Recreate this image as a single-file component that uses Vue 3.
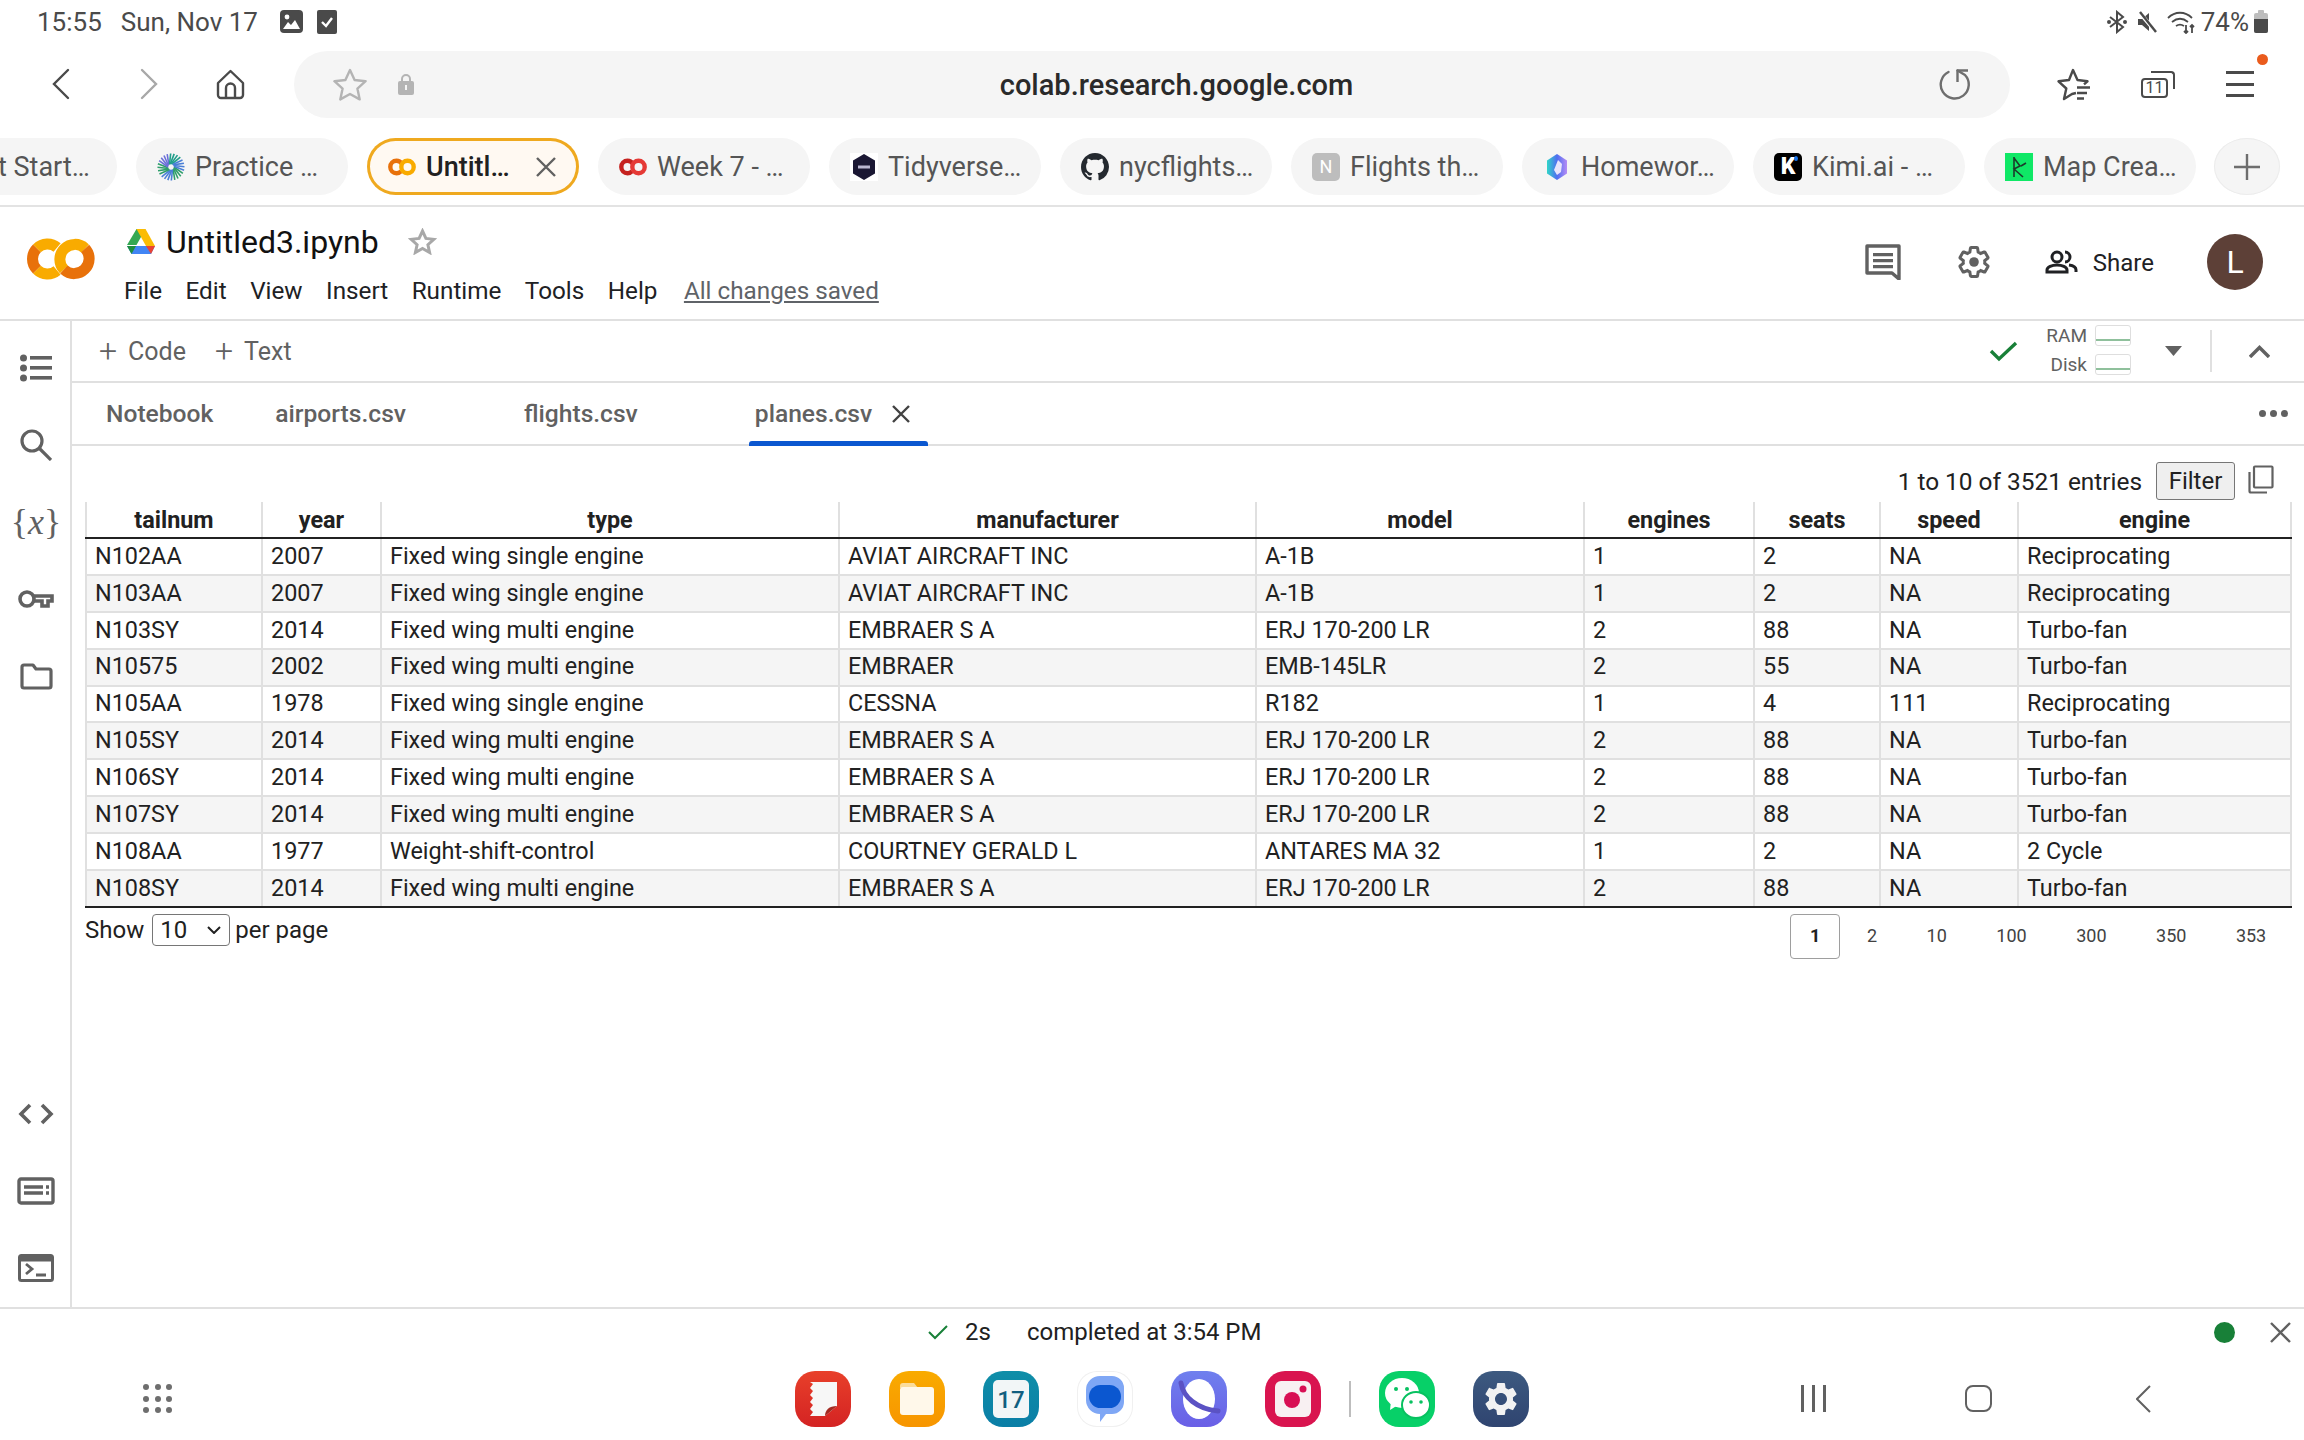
<template>
  <div class="page">
    <!-- android status bar -->
    <div class="status-bar">
      <span class="clock">15:55</span>
      <span class="clock date">Sun, Nov 17</span>
      <svg class="st-img" width="23" height="23" viewBox="0 0 23 23">
        <rect width="23" height="23" rx="4" fill="#4a4a4a" />
        <circle cx="7" cy="7" r="2.4" fill="#fff" />
        <path d="M3 19l5-7 3 3 4-5 5 9z" fill="#fff" />
      </svg>
      <svg class="st-check" width="20" height="24" viewBox="0 0 20 24">
        <rect width="20" height="24" rx="2" fill="#4a4a4a" />
        <path d="M5 12l4 4 6-8" fill="none" stroke="#fff" stroke-width="2.4" />
      </svg>
      <div class="status-right">
        <svg width="20" height="24" viewBox="0 0 20 24" fill="none" stroke="#4a4a4a" stroke-width="2">
          <path d="M3 7l13 10-6 5V2l6 5L3 17" />
          <circle cx="2" cy="12" r="1" fill="#4a4a4a" />
          <circle cx="18" cy="12" r="1" fill="#4a4a4a" />
        </svg>
        <svg class="ml10" width="20" height="24" viewBox="0 0 20 24">
          <path d="M1 9h4l7-6v18l-7-6H1z" fill="#4a4a4a" />
          <path d="M2 2l17 20" stroke="#fff" stroke-width="4" />
          <path d="M3 2l16 20" stroke="#4a4a4a" stroke-width="2.4" />
        </svg>
        <svg class="ml10" width="29" height="24" viewBox="0 0 29 24" fill="none" stroke="#4a4a4a" stroke-width="1.8">
          <path d="M1 8c7-7 17-7 24 0M5 12c5-4 11-4 16 0M9 16c3-2 5-2 8 0" />
          <path d="M19 15v8M17 21l2 2 2-2M25 23v-8M23 17l2-2 2 2" />
        </svg>
        <span class="clock pct">74%</span>
        <svg class="ml5" width="14" height="23" viewBox="0 0 14 23">
          <rect y="3" width="14" height="20" rx="2" fill="#bdbdbd" />
          <rect x="4" width="6" height="4" rx="1" fill="#bdbdbd" />
          <path d="M0 9h14v12a2 2 0 0 1-2 2H2a2 2 0 0 1-2-2z" fill="#4a4a4a" />
        </svg>
      </div>
    </div>

    <!-- browser toolbar -->
    <div class="nav-row">
      <svg class="nb-back" width="18" height="32" viewBox="0 0 18 32" fill="none" stroke="#4a4a4a" stroke-width="2.4" stroke-linecap="round"><path d="M16 2L2 16l14 14" /></svg>
      <svg class="nb-fwd" width="18" height="32" viewBox="0 0 18 32" fill="none" stroke="#a8a8a8" stroke-width="2.4" stroke-linecap="round"><path d="M2 2l14 14L2 30" /></svg>
      <svg class="nb-home" width="29" height="31" viewBox="0 0 29 31" fill="none" stroke="#4a4a4a" stroke-width="2.4">
        <path d="M2 14L14.500 2 27 14v12a3 3 0 0 1-3 3H5a3 3 0 0 1-3-3z" stroke-linejoin="round" />
        <path d="M10 29V19a4.500 4.500 0 0 1 9 0v10" />
      </svg>
      <div class="url-bar">
        <svg width="34" height="33" viewBox="0 0 34 33" fill="none" stroke="#b4b4b4" stroke-width="2.4" stroke-linejoin="round">
          <path d="M17 2l4.600 10 11 1.200-8.200 7.400 2.300 10.800L17 26l-9.700 5.400 2.300-10.800-8.200-7.400 11-1.200z" />
        </svg>
        <svg class="lock" width="16" height="22" viewBox="0 0 16 22">
          <path d="M4 9V6a4 4 0 0 1 8 0v3" fill="none" stroke="#b4b4b4" stroke-width="2" />
          <rect y="8" width="16" height="14" rx="2" fill="#b4b4b4" />
          <rect x="7" y="12" width="2" height="5" fill="#f5f5f5" />
        </svg>
        <span class="url">colab.research.google.com</span>
        <svg width="31" height="32" viewBox="0 0 31 32" fill="none" stroke="#6e6e6e" stroke-width="2.4" stroke-linejoin="round">
          <path d="M9.500 4A14 14 0 1 0 26 7L18.500 2.500" stroke-linecap="round" />
          <path d="M29 2.500H18.500V14" />
        </svg>
      </div>
      <svg class="nb-fav" width="35" height="33" viewBox="0 0 35 33" fill="none" stroke="#4a4a4a" stroke-width="2.4" stroke-linejoin="round">
        <path d="M20 25l-4 1-8 5 2.300-10.500-7.800-7.200 10.500-1.300L17 2l4.500 10 10 1.300-3.500 3" />
        <path d="M21 19.500h13M21 25h10M21 30.500h7" />
      </svg>
      <div class="nb-tabs">11</div>
      <div class="nb-menu">
        <i></i><i></i><i></i>
        <b class="menu-dot"></b>
      </div>
    </div>

    <!-- tab strip -->
    <div class="tab-strip">
      <div v-for="t in tabs" :key="t.label" class="tab" :class="{ active: t.active }">
        <svg v-if="t.icon === 'practice'" class="fav" viewBox="0 0 28 28" stroke-width="1.600">
          <line v-for="r in rays" :key="r.k" :x1="r.x1" :y1="r.y1" :x2="r.x2" :y2="r.y2" :stroke="r.c" />
        </svg>
        <svg v-else-if="t.icon === 'co' || t.icon === 'cored'" class="fav" viewBox="0 0 28 28" fill="none" stroke-width="4.400">
          <circle cx="8.500" cy="14" r="6.200" :stroke="t.icon === 'co' ? '#e8710a' : '#c5221f'" stroke-dasharray="30 9" stroke-dashoffset="-4.500" />
          <circle cx="19.500" cy="14" r="6.200" :stroke="t.icon === 'co' ? '#f9ab00' : '#e53935'" />
        </svg>
        <svg v-else-if="t.icon === 'tidy'" class="fav" viewBox="0 0 28 28">
          <rect width="28" height="28" fill="#fff" />
          <path d="M14 1l11 6.500v13L14 27 3 20.500v-13z" fill="#1a1733" />
          <rect x="8" y="12.500" width="12" height="3" fill="#b9b6d0" />
        </svg>
        <svg v-else-if="t.icon === 'gh'" class="fav" viewBox="0 0 16 16">
          <path fill="#24292f" d="M8 0C3.580 0 0 3.580 0 8c0 3.540 2.290 6.530 5.470 7.590.4.070.55-.17.55-.38 0-.19-.01-.82-.01-1.490-2.010.37-2.530-.49-2.690-.94-.09-.23-.48-.94-.82-1.130-.28-.15-.68-.52-.01-.53.63-.01 1.080.58 1.230.82.72 1.210 1.870.87 2.330.66.070-.52.28-.87.51-1.070-1.780-.2-3.640-.89-3.640-3.950 0-.87.31-1.590.82-2.150-.08-.2-.36-1.020.08-2.120 0 0 .67-.21 2.200.82.64-.18 1.320-.27 2-.27.68 0 1.360.09 2 .27 1.530-1.040 2.200-.82 2.200-.82.44 1.100.16 1.920.08 2.120.51.56.82 1.270.82 2.150 0 3.070-1.870 3.750-3.650 3.950.29.25.54.73.54 1.480 0 1.070-.01 1.930-.01 2.200 0 .21.15.46.55.38A8.013 8.013 0 0 0 16 8c0-4.420-3.580-8-8-8z" />
        </svg>
        <span v-else-if="t.icon === 'n'" class="fav fav-n">N</span>
        <svg v-else-if="t.icon === 'hw'" class="fav" viewBox="0 0 28 28">
          <defs>
            <linearGradient id="hwg" x1="0" x2="1" y1="0" y2="0">
              <stop offset="0" stop-color="#2fd6c8" />
              <stop offset="0.5" stop-color="#4f6ef0" />
              <stop offset="1" stop-color="#b68cf5" />
            </linearGradient>
          </defs>
          <path d="M14 1l10 6.500v13L14 27 4 20.500v-13z" fill="url(#hwg)" />
          <path d="M15 7l4 4-1 8-4 3-3-5z" fill="#e8e4fb" />
        </svg>
        <span v-else-if="t.icon === 'k'" class="fav fav-k">K<b></b></span>
        <svg v-else-if="t.icon === 'map'" class="fav" viewBox="0 0 28 28">
          <rect width="28" height="28" fill="#0fe866" />
          <path d="M9 4v20M9 5l6 8-6 3 9 8M16 13l5-3" fill="none" stroke="#1c3a2b" stroke-width="1.600" />
        </svg>
        <span class="tab-label">{{ t.label }}</span>
        <svg v-if="t.active" class="tab-x" width="20" height="20" viewBox="0 0 20 20" stroke="#616161" stroke-width="2.400"><path d="M1 1l18 18M19 1L1 19" /></svg>
      </div>
      <div class="tab-plus">
        <svg width="28" height="28" viewBox="0 0 28 28" stroke="#6e6e6e" stroke-width="2.400"><path d="M14 1v26M1 14h26" /></svg>
      </div>
    </div>

    <!-- colab header -->
    <header class="colab-head">
      <svg class="logo" width="68" height="42" viewBox="0 0 68 42" fill="none" stroke-width="11">
        <path d="M30.100 9.500A15 15 0 0 0 9.900 10.400M9.900 31.600A15 15 0 0 0 30.100 32.500" stroke="#f9ab00" />
        <path d="M9.900 10.400A15 15 0 0 0 9.900 31.600" stroke="#e8710a" />
        <path d="M36.900 31.600A15 15 0 0 1 58.100 10.400" stroke="#f9ab00" />
        <path d="M58.100 10.400A15 15 0 0 1 36.900 31.600" stroke="#e8710a" />
      </svg>
      <div class="title-block">
        <div class="title-row">
          <svg width="28" height="25" viewBox="0 0 28 25">
            <path d="M9.500 0h9l-9 16H0z" fill="#34a853" transform="translate(0 0)" />
            <path d="M9.500 0h9L28 17h-9z" fill="#fbbc04" />
            <path d="M5 17h23l-4 8H4.500L0 17z" fill="#4285f4" />
            <path d="M0 17h9l-4.500 8z" fill="#1e8e3e" />
            <path d="M19 17h9l-4 8z" fill="#ea4335" />
          </svg>
          <span class="doc-name">Untitled3.ipynb</span>
          <svg class="doc-star" width="29" height="27" viewBox="0 0 29 27" fill="none" stroke="#a8a8a8" stroke-width="3" stroke-linejoin="miter">
            <path d="M14.500 3l3.400 7.400 8 .9-6 5.400 1.700 7.800-7.100-4-7.100 4 1.700-7.800-6-5.400 8-.9z" />
          </svg>
        </div>
        <nav class="menu-row">
          <span v-for="m in menus" :key="m">{{ m }}</span>
          <span class="saved">All changes saved</span>
        </nav>
      </div>
      <div class="head-right">
        <svg width="36" height="36" viewBox="0 0 36 36" fill="none">
          <path d="M2 2h32v33l-7-6H2z" stroke="#616161" stroke-width="3.400" stroke-linejoin="round" />
          <path d="M8 9h20v3.200H8zM8 15h20v3.200H8zM8 21h20v3.200H8z" fill="#616161" />
        </svg>
        <svg class="gear" width="36" height="36" viewBox="0 0 24 24">
          <path fill="none" stroke="#616161" stroke-width="2" d="M19.140 12.940c.04-.3.06-.61.06-.94 0-.32-.02-.64-.07-.94l2.030-1.580a.49.49 0 0 0 .12-.61l-1.920-3.320a.488.488 0 0 0-.59-.22l-2.390.96c-.5-.38-1.030-.7-1.620-.94l-.36-2.540a.484.484 0 0 0-.48-.41h-3.840c-.24 0-.43.17-.47.41l-.36 2.540c-.59.24-1.130.57-1.620.94l-2.390-.96c-.22-.08-.47 0-.59.22L2.740 8.870c-.12.21-.08.47.12.61l2.030 1.580c-.05.3-.09.63-.09.94s.02.64.07.94l-2.030 1.580a.49.49 0 0 0-.12.61l1.920 3.320c.12.22.37.29.59.22l2.390-.96c.5.38 1.030.7 1.620.94l.36 2.540c.05.24.24.41.48.41h3.840c.24 0 .44-.17.47-.41l.36-2.540c.59-.24 1.130-.56 1.620-.94l2.390.96c.22.08.47 0 .59-.22l1.920-3.320c.12-.22.07-.47-.12-.61l-2.010-1.580z" />
          <circle cx="12" cy="12" r="3.200" fill="#616161" />
        </svg>
        <svg class="people" width="33" height="24" viewBox="0 0 33 24" fill="none" stroke="#202124" stroke-width="3">
          <circle cx="12" cy="7" r="5" />
          <path d="M2 22v-2c0-3 5-5 10-5s10 2 10 5v2z" />
          <path d="M20 2a5 5 0 0 1 0 10M24 15c4 .6 7 2.500 7 5v2" />
        </svg>
        <span class="share">Share</span>
        <div class="avatar">L</div>
      </div>
    </header>

    <div class="workspace">
      <!-- left rail -->
      <aside class="rail">
        <div class="rail-group">
          <div class="rail-btn">
            <svg width="32" height="28" viewBox="0 0 32 28" fill="#616161">
              <circle cx="3.500" cy="4" r="3.500" /><circle cx="3.500" cy="14" r="3.500" /><circle cx="3.500" cy="24" r="3.500" />
              <rect x="10" y="2" width="22" height="3.600" /><rect x="10" y="12" width="22" height="3.600" /><rect x="10" y="22" width="22" height="3.600" />
            </svg>
          </div>
          <div class="rail-btn">
            <svg width="32" height="32" viewBox="0 0 32 32" fill="none" stroke="#616161" stroke-width="3.200">
              <circle cx="12" cy="12" r="10" /><path d="M19 19l12 12" />
            </svg>
          </div>
          <div class="rail-btn"><span class="var-icon">{<i>x</i>}</span></div>
          <div class="rail-btn">
            <svg width="36" height="20" viewBox="0 0 36 20" fill="none" stroke="#616161" stroke-width="3.600">
              <circle cx="9" cy="10" r="7" />
              <path d="M16 7h18v5h-4v5h-6v-5h-8" />
            </svg>
          </div>
          <div class="rail-btn">
            <svg width="33" height="27" viewBox="0 0 33 27" fill="none" stroke="#616161" stroke-width="3.200" stroke-linejoin="round">
              <path d="M2 4a2 2 0 0 1 2-2h9l3 4h13a2 2 0 0 1 2 2v15a2 2 0 0 1-2 2H4a2 2 0 0 1-2-2z" />
            </svg>
          </div>
        </div>
        <div class="rail-group">
          <div class="rail-btn">
            <svg width="36" height="22" viewBox="0 0 36 22" fill="none" stroke="#616161" stroke-width="3.600">
              <path d="M12 2L3 11l9 9M24 2l9 9-9 9" />
            </svg>
          </div>
          <div class="rail-btn">
            <svg width="38" height="28" viewBox="0 0 38 28" fill="none" stroke="#616161" stroke-width="3.400">
              <rect x="2" y="2" width="34" height="24" rx="2" />
              <path d="M7 10h19M7 16h19M29 10h3M29 16h3" />
            </svg>
          </div>
          <div class="rail-btn">
            <svg width="36" height="28" viewBox="0 0 36 28" fill="none" stroke="#616161" stroke-width="3">
              <rect x="1.500" y="1.500" width="33" height="25" rx="2" />
              <path d="M1.500 5h33" stroke-width="5" />
              <path d="M8 10l6 5-6 5M18 21h10" stroke-width="2.800" />
            </svg>
          </div>
        </div>
      </aside>

      <main class="main">
        <div class="cell-bar">
          <span class="add-btn"><b>+</b>Code</span>
          <span class="add-btn text-btn"><b>+</b>Text</span>
          <svg class="conn-check" width="29" height="21" viewBox="0 0 29 21" fill="none" stroke="#188038" stroke-width="3.400"><path d="M2 10l8 8L27 2" /></svg>
          <div class="meters">
            <div class="meter-row"><span>RAM</span><div class="meter"></div></div>
            <div class="meter-row"><span>Disk</span><div class="meter"></div></div>
          </div>
          <svg class="caret" width="17" height="10" viewBox="0 0 17 10"><path d="M0 0h17l-8.500 10z" fill="#616161" /></svg>
          <div class="bar-sep"></div>
          <svg class="chev" width="21" height="13" viewBox="0 0 21 13" fill="none" stroke="#616161" stroke-width="3.400"><path d="M1 12l9.500-9.500L20 12" /></svg>
        </div>

        <div class="file-tabs">
          <span class="ftab f-note">Notebook</span>
          <span class="ftab f-air">airports.csv</span>
          <span class="ftab f-fli">flights.csv</span>
          <div class="f-cur">
            <span class="ftab">planes.csv</span>
            <svg width="18" height="18" viewBox="0 0 18 18" stroke="#424242" stroke-width="2.400"><path d="M1 1l16 16M17 1L1 17" /></svg>
          </div>
          <div class="more"><i></i><i></i><i></i></div>
        </div>

        <section class="sheet">
          <div class="info-row">
            <span>1 to 10 of 3521 entries</span>
            <button class="filter-btn">Filter</button>
            <svg class="copy" width="26" height="29" viewBox="0 0 26 29" fill="none" stroke="#616161" stroke-width="2.200">
              <rect x="6" y="1.500" width="18.500" height="21" rx="1" />
              <path d="M1.500 7v19a1.500 1.500 0 0 0 1.500 1.500h16" />
            </svg>
          </div>
          <table class="grid">
            <colgroup>
              <col v-for="c in columns" :key="c.name" :style="{ width: c.width + 'px' }" />
            </colgroup>
            <thead>
              <tr><th v-for="c in columns" :key="c.name">{{ c.name }}</th></tr>
            </thead>
            <tbody>
              <tr v-for="r in rows" :key="r[0]">
                <td v-for="(v, i) in r" :key="i">{{ v }}</td>
              </tr>
            </tbody>
          </table>
          <div class="foot-row">
            <span>Show</span>
            <div class="select">
              <span>10</span>
              <svg width="14" height="8" viewBox="0 0 14 8" fill="none" stroke="#212121" stroke-width="2"><path d="M1 1l6 6 6-6" /></svg>
            </div>
            <span>per page</span>
            <div class="pager">
              <span v-for="(p, i) in pages" :key="p" class="page-no" :class="{ current: i === 0 }">{{ p }}</span>
            </div>
          </div>
        </section>
      </main>
    </div>

    <footer class="run-bar">
      <svg width="20" height="15" viewBox="0 0 20 15" fill="none" stroke="#188038" stroke-width="2"><path d="M1 7l6 6L19 1" /></svg>
      <span class="run-dur">2s</span>
      <span class="run-msg">completed at 3:54 PM</span>
      <b class="run-dot"></b>
      <svg class="run-x" width="21" height="21" viewBox="0 0 21 21" stroke="#616161" stroke-width="2.400"><path d="M1 1l19 19M20 1L1 20" /></svg>
    </footer>

    <!-- android nav / dock -->
    <div class="dock-row">
      <div class="dots"><i v-for="n in 9" :key="n"></i></div>
      <div class="dock">
        <div class="app app-notes">
          <svg width="32" height="38" viewBox="0 0 32 38"><path d="M3 2h27v24L18 36H3l3-4-3-3 3-4-3-3 3-4-3-3 3-4-3-3 3-4z" fill="#f7f7f7" /><path d="M18 36c0-6 4-10 12-10z" fill="#a32a22" /></svg>
        </div>
        <div class="app app-files">
          <svg width="36" height="34" viewBox="0 0 36 34"><path d="M1 4a3 3 0 0 1 3-3h11l4 5H1z" fill="#fbdc9a" /><rect x="1" y="5" width="34" height="28" rx="3" fill="#fff8ea" /></svg>
        </div>
        <div class="app app-cal"><div class="cal-page">17</div></div>
        <div class="app app-msg">
          <svg width="38" height="46" viewBox="0 0 38 46"><path d="M14 0h12a12 12 0 0 1 12 12v14a12 12 0 0 1-12 12h-6l-6 8v-8A14 14 0 0 1 0 24V14A14 14 0 0 1 14 0z" fill="#7fa7f5" /><rect x="3" y="9" width="32" height="23" rx="11.500" fill="#0b57d0" /></svg>
        </div>
        <div class="app app-net">
          <svg width="46" height="46" viewBox="0 0 46 46" fill="none">
            <ellipse cx="23" cy="23" rx="16" ry="20" fill="#fff" />
            <path d="M5 7c2 14 16 26 37 28" stroke="#5b52c4" stroke-width="5" stroke-linecap="round" />
          </svg>
        </div>
        <div class="app app-cam">
          <svg width="36" height="36" viewBox="0 0 36 36"><rect width="36" height="36" rx="6" fill="#f8f0f2" /><circle cx="17" cy="19" r="8" fill="#d80f54" /><circle cx="28" cy="8" r="3.500" fill="#d80f54" /></svg>
        </div>
        <div class="dock-sep"></div>
        <div class="app app-wx">
          <svg width="46" height="44" viewBox="0 0 46 44">
            <ellipse cx="18" cy="16" rx="17" ry="15" fill="#fff" />
            <path d="M7 24l-1 9 8-5z" fill="#fff" />
            <ellipse cx="32" cy="28" rx="14" ry="13" fill="#fff" stroke="#07c160" stroke-width="2" />
            <circle cx="12" cy="12" r="2" fill="#07c160" /><circle cx="23" cy="12" r="2" fill="#07c160" />
            <circle cx="27" cy="25" r="1.800" fill="#07c160" /><circle cx="37" cy="25" r="1.800" fill="#07c160" />
          </svg>
        </div>
        <div class="app app-set">
          <svg width="40" height="40" viewBox="0 0 24 24"><path fill="#f2f2f2" fill-rule="evenodd" d="M19.140 12.940c.04-.3.06-.61.06-.94 0-.32-.02-.64-.07-.94l2.030-1.580a.49.49 0 0 0 .12-.61l-1.920-3.320a.488.488 0 0 0-.59-.22l-2.390.96c-.5-.38-1.030-.7-1.620-.94l-.36-2.540a.484.484 0 0 0-.48-.41h-3.840c-.24 0-.43.17-.47.41l-.36 2.540c-.59.24-1.130.57-1.620.94l-2.390-.96c-.22-.08-.47 0-.59.22L2.740 8.870c-.12.21-.08.47.12.61l2.030 1.580c-.05.3-.09.63-.09.94s.02.64.07.94l-2.030 1.580a.49.49 0 0 0-.12.61l1.920 3.320c.12.22.37.29.59.22l2.390-.96c.5.38 1.030.7 1.620.94l.36 2.540c.05.24.24.41.48.41h3.840c.24 0 .44-.17.47-.41l.36-2.540c.59-.24 1.130-.56 1.620-.94l2.390.96c.22.08.47 0 .59-.22l1.920-3.320c.12-.22.07-.47-.12-.61l-2.010-1.580zM12 15.600c-1.980 0-3.600-1.620-3.600-3.600s1.620-3.600 3.600-3.600 3.600 1.620 3.600 3.600-1.620 3.600-3.600 3.600z" /></svg>
        </div>
      </div>
      <div class="sys-nav">
        <div class="recent"><i></i><i></i><i></i></div>
        <div class="home-sq"></div>
        <svg width="15" height="28" viewBox="0 0 15 28" fill="none" stroke="#616161" stroke-width="2"><path d="M14 1L1 14l13 13" /></svg>
      </div>
    </div>
  </div>
</template>

<script setup>
const tabs = [
  { label: 't Start…' },
  { label: 'Practice …', icon: 'practice' },
  { label: 'Untitl…', icon: 'co', active: true },
  { label: 'Week 7 - …', icon: 'cored' },
  { label: 'Tidyverse…', icon: 'tidy' },
  { label: 'nycflights…', icon: 'gh' },
  { label: 'Flights th…', icon: 'n' },
  { label: 'Homewor…', icon: 'hw' },
  { label: 'Kimi.ai - …', icon: 'k' },
  { label: 'Map Crea…', icon: 'map' }
]

// pinwheel favicon of the "Practice" tab
const rayColors = ['#2e9e6b', '#4a7fd6', '#2e9e6b', '#6a6fd8', '#1f9e8a', '#4a7fd6']
const rays = []
for (let i = 0; i < 24; i++) {
  const a = (i / 24) * Math.PI * 2
  const b = a + 0.5
  rays.push({
    k: i,
    x1: 14 + Math.cos(a) * 3,
    y1: 14 + Math.sin(a) * 3,
    x2: 14 + Math.cos(b) * 13.5,
    y2: 14 + Math.sin(b) * 13.5,
    c: rayColors[Math.floor(i / 4)]
  })
}

const menus = ['File', 'Edit', 'View', 'Insert', 'Runtime', 'Tools', 'Help']

const columns = [
  { name: 'tailnum', width: 176 },
  { name: 'year', width: 119 },
  { name: 'type', width: 458 },
  { name: 'manufacturer', width: 417 },
  { name: 'model', width: 328 },
  { name: 'engines', width: 170 },
  { name: 'seats', width: 126 },
  { name: 'speed', width: 138 },
  { name: 'engine', width: 273 }
]

const single = 'Fixed wing single engine'
const multi = 'Fixed wing multi engine'
const rows = [
  ['N102AA', '2007', single, 'AVIAT AIRCRAFT INC', 'A-1B', '1', '2', 'NA', 'Reciprocating'],
  ['N103AA', '2007', single, 'AVIAT AIRCRAFT INC', 'A-1B', '1', '2', 'NA', 'Reciprocating'],
  ['N103SY', '2014', multi, 'EMBRAER S A', 'ERJ 170-200 LR', '2', '88', 'NA', 'Turbo-fan'],
  ['N10575', '2002', multi, 'EMBRAER', 'EMB-145LR', '2', '55', 'NA', 'Turbo-fan'],
  ['N105AA', '1978', single, 'CESSNA', 'R182', '1', '4', '111', 'Reciprocating'],
  ['N105SY', '2014', multi, 'EMBRAER S A', 'ERJ 170-200 LR', '2', '88', 'NA', 'Turbo-fan'],
  ['N106SY', '2014', multi, 'EMBRAER S A', 'ERJ 170-200 LR', '2', '88', 'NA', 'Turbo-fan'],
  ['N107SY', '2014', multi, 'EMBRAER S A', 'ERJ 170-200 LR', '2', '88', 'NA', 'Turbo-fan'],
  ['N108AA', '1977', 'Weight-shift-control', 'COURTNEY GERALD L', 'ANTARES MA 32', '1', '2', 'NA', '2 Cycle'],
  ['N108SY', '2014', multi, 'EMBRAER S A', 'ERJ 170-200 LR', '2', '88', 'NA', 'Turbo-fan']
]

const pages = [1, 2, 10, 100, 300, 350, 353]
</script>

<style>
html, body { margin: 0; background: #fff; }
</style>

<style scoped>
.page {
  width: 2304px;
  height: 1440px;
  display: flex;
  flex-direction: column;
  overflow: hidden;
  background: #fff;
  font-family: Roboto, "Noto Sans", sans-serif;
  color: #212121;
}

/* status bar */
.status-bar {
  height: 43px;
  display: flex;
  align-items: center;
  padding: 0 36px 0 37px;
  flex: none;
}
.clock { font-size: 26px; color: #4a4a4a; }
.date { margin-left: 19px; }
.st-img { margin-left: 22px; }
.st-check { margin-left: 14px; }
.status-right { margin-left: auto; display: flex; align-items: center; }
.ml10 { margin-left: 10px; }
.ml5 { margin-left: 5px; }
.pct { margin-left: 5px; }

/* browser toolbar */
.nav-row {
  height: 82px;
  display: flex;
  align-items: center;
  flex: none;
  padding-left: 52px;
}
.nb-fwd { margin-left: 70px; }
.nb-home { margin-left: 58px; }
.url-bar {
  width: 1716px;
  height: 67px;
  margin-left: 49px;
  border-radius: 34px;
  background: #f5f5f5;
  display: flex;
  align-items: center;
  padding: 0 40px 0 39px;
  box-sizing: border-box;
}
.lock { margin-left: 31px; }
.url { flex: 1; text-align: center; font-size: 29px; font-weight: 500; color: #2a2a2a; padding-top: 2px; }
.nb-fav { margin-left: 46px; }
.nb-tabs {
  width: 23px;
  height: 16px;
  margin: 8px 0 0 50px;
  border: 2.400px solid #4a4a4a;
  border-radius: 4px;
  font-size: 16px;
  line-height: 16px;
  text-align: center;
  color: #4a4a4a;
  position: relative;
  flex: none;
}
.nb-tabs::after {
  content: '';
  position: absolute;
  top: -9px;
  right: -9px;
  width: 22px;
  height: 16px;
  border-top: 2.400px solid #4a4a4a;
  border-right: 2.400px solid #4a4a4a;
  border-top-right-radius: 4px;
}
.nb-menu {
  width: 28px;
  height: 26px;
  margin-left: 58px;
  display: flex;
  flex-direction: column;
  justify-content: space-between;
  position: relative;
}
.nb-menu i { height: 3px; background: #4a4a4a; display: block; }
.menu-dot {
  position: absolute;
  top: -17px;
  right: -14px;
  width: 11px;
  height: 11px;
  border-radius: 50%;
  background: #ea5b1c;
}

/* tabs */
.tab-strip {
  height: 82px;
  padding-top: 13px;
  margin-left: -95px;
  display: flex;
  gap: 19px;
  flex: none;
  box-sizing: border-box;
  width: 2399px;
  position: relative;
}
.tab-strip::after {
  content: '';
  position: absolute;
  left: 0;
  right: 0;
  bottom: 0;
  height: 2px;
  background: #e3e3e3;
}
.tab {
  width: 212px;
  height: 57px;
  border-radius: 29px;
  background: #f5f5f5;
  display: flex;
  align-items: center;
  padding-left: 21px;
  box-sizing: border-box;
  font-size: 27px;
  color: #555;
  flex: none;
  white-space: nowrap;
}
.tab.active {
  background: #fff9f2;
  box-shadow: inset 0 0 0 3px #efa91f;
  color: #212121;
  font-weight: 500;
}
.tab-x { margin-left: auto; margin-right: 23px; }
.fav { width: 28px; height: 28px; flex: none; margin-right: 10px; display: block; }
.fav-n {
  background: #bdbdbd;
  border-radius: 5px;
  color: #fff;
  font-size: 18px;
  line-height: 28px;
  text-align: center;
}
.fav-k {
  background: #000;
  border-radius: 5px;
  color: #fff;
  font-size: 23px;
  font-weight: 900;
  line-height: 28px;
  text-align: center;
  position: relative;
}
.fav-k b {
  position: absolute;
  right: 4px;
  top: 3px;
  width: 4px;
  height: 5px;
  background: #1a73e8;
  border-radius: 50%;
}
.tab:first-child { padding-left: 93px; }
.tab-plus {
  width: 66px;
  height: 57px;
  border-radius: 50%;
  background: #f5f5f5;
  box-shadow: inset 0 0 0 1px #ececec;
  display: flex;
  align-items: center;
  justify-content: center;
  flex: none;
  margin-left: -1px;
}

/* colab header */
.colab-head {
  height: 112px;
  flex: none;
  display: flex;
  border-bottom: 2px solid #e0e0e0;
  box-sizing: content-box;
  padding-left: 27px;
}
.logo { margin-top: 31px; }
.title-block { margin-left: 29px; padding-top: 21px; }
.title-row { display: flex; align-items: center; height: 27px; margin-left: 3px; }
.doc-name { margin-left: 11px; font-size: 32px; color: #111; }
.doc-star { margin-left: 29px; }
.menu-row {
  margin-top: 21px;
  display: flex;
  gap: 23.500px;
  font-size: 24.250px;
  line-height: 30px;
  color: #202124;
}
.saved { margin-left: 3px; color: #5f6368; text-decoration: underline; }
.head-right {
  margin-left: auto;
  padding-right: 41px;
  display: flex;
  align-items: center;
  margin-top: -3px;
}
.gear { margin-left: 55px; }
.people { margin-left: 53px; }
.share { margin: 2px 0 0 15px; font-size: 24px; color: #202124; }
.avatar {
  margin-left: 53px;
  width: 56px;
  height: 56px;
  border-radius: 50%;
  background: #5d4037;
  color: #fff;
  font-size: 32px;
  text-align: center;
  line-height: 56px;
}

/* rail + main */
.workspace { flex: 1; display: flex; min-height: 0; }
.rail {
  width: 72px;
  flex: none;
  box-sizing: border-box;
  border-right: 2px solid #e0e0e0;
  display: flex;
  flex-direction: column;
  justify-content: space-between;
  padding: 8px 0 0 2px;
}
.rail-btn { height: 77.200px; display: flex; align-items: center; justify-content: center; }
.var-icon { font-family: "Liberation Serif", serif; font-size: 36px; color: #616161; white-space: nowrap; }
.main { flex: 1; min-width: 0; display: flex; flex-direction: column; }

.cell-bar {
  height: 60px;
  flex: none;
  display: flex;
  align-items: center;
  border-bottom: 2px solid #e0e0e0;
  padding-left: 27px;
  font-size: 25px;
  color: #616161;
}
.add-btn { display: flex; align-items: center; }
.add-btn b { font-weight: 300; font-size: 32px; margin-right: 11px; line-height: 1; }
.text-btn { margin-left: 29px; }
.conn-check { margin-left: auto; }
.meters { margin: -3px 0 0 28px; display: flex; flex-direction: column; gap: 6px; align-items: flex-end; }
.meter-row { display: flex; align-items: center; gap: 8px; font-size: 19px; color: #616161; }
.meter {
  width: 36px;
  height: 21px;
  border: 1px solid #dedede;
  border-radius: 3px;
  box-sizing: border-box;
  position: relative;
}
.meter::after {
  content: '';
  position: absolute;
  left: 0;
  right: 0;
  bottom: 4px;
  height: 2px;
  background: #8fc09c;
}
.caret { margin-left: 34px; }
.bar-sep { width: 2px; height: 42px; background: #e0e0e0; margin-left: 28px; }
.chev { margin-left: 37px; margin-right: 34px; }

.file-tabs {
  height: 63px;
  flex: none;
  display: flex;
  align-items: center;
  border-bottom: 2px solid #e0e0e0;
  position: relative;
  font-size: 24.600px;
  font-weight: 500;
  color: #616161;
  box-sizing: border-box;
}
.ftab { white-space: nowrap; }
.f-note { margin-left: 34px; }
.f-air { margin-left: 62px; }
.f-fli { margin-left: 118px; }
.f-cur {
  margin-left: 111px;
  width: 179px;
  height: 63px;
  padding-left: 6px;
  box-sizing: border-box;
  display: flex;
  align-items: center;
  gap: 20px;
  position: relative;
}
.f-cur::after {
  content: '';
  position: absolute;
  left: 0;
  right: 0;
  bottom: -1px;
  height: 5px;
  border-radius: 3px 3px 0 0;
  background: #0b57d0;
}
.more { margin-left: auto; margin-right: 16px; display: flex; gap: 4px; }
.more i { width: 7px; height: 7px; border-radius: 50%; background: #616161; display: block; }

.sheet { padding: 0 13px 0 13px; flex: 1; }
.info-row {
  height: 56px;
  display: flex;
  align-items: center;
  justify-content: flex-end;
  font-size: 24.400px;
  padding-top: 14px;
  box-sizing: border-box;
}
.filter-btn {
  margin-left: 14px;
  width: 79px;
  height: 38px;
  padding: 0;
  background: #efefef;
  border: 1px solid #767676;
  border-radius: 3px;
  font: 24px Roboto, sans-serif;
  color: #212121;
}
.copy { margin: 0 17px 4px 13px; }

.grid {
  table-layout: fixed;
  border-collapse: collapse;
  width: 2205px;
  font-size: 23.400px;
}
.grid th {
  height: 35px;
  padding: 0;
  font-weight: 700;
  text-align: center;
  border-left: 2px solid #e0e0e0;
  border-right: 2px solid #e0e0e0;
  border-bottom: 2px solid #212121;
  color: #212121;
}
.grid td {
  height: 34.900px;
  padding: 0 0 0 8px;
  border: 2px solid #e0e0e0;
  white-space: nowrap;
  line-height: 1;
}
.grid tbody tr:nth-child(even) td { background: #f5f5f5; }
.grid tbody tr:last-child td { border-bottom: 2px solid #212121; }

.foot-row { display: flex; align-items: flex-start; margin-top: 6px; font-size: 24px; line-height: 32px; }
.select {
  margin: 0 5px 0 8px;
  width: 78px;
  height: 32px;
  border: 1px solid #767676;
  border-radius: 4px;
  box-sizing: border-box;
  display: flex;
  align-items: center;
  justify-content: space-between;
  padding: 0 8px 0 7px;
}
.pager { margin-left: auto; display: flex; align-items: flex-start; }
.page-no {
  font-size: 18px;
  line-height: 44px;
  color: #424242;
  padding: 0 24.750px;
  text-align: center;
}
.page-no.current {
  width: 50px;
  height: 45px;
  box-sizing: border-box;
  border: 1px solid #9e9e9e;
  border-radius: 4px;
  font-weight: 700;
  color: #212121;
  padding: 0;
  margin-right: 2px;
  line-height: 42px;
}

/* bottom bars */
.run-bar {
  height: 50px;
  flex: none;
  border-top: 2px solid #e0e0e0;
  display: flex;
  align-items: center;
  padding-left: 928px;
  padding-bottom: 2px;
  box-sizing: border-box;
  font-size: 24px;
  color: #212121;
}
.run-dur { margin-left: 17px; }
.run-msg { margin-left: 36px; }
.run-dot { margin-left: auto; width: 21px; height: 21px; border-radius: 50%; background: #188038; }
.run-x { margin: 0 13px 0 35px; }

.dock-row {
  height: 83px;
  flex: none;
  display: flex;
  align-items: center;
  padding-left: 143px;
}
.dots { display: grid; grid-template-columns: repeat(3, 6px); gap: 5.500px; width: 29px; }
.dots i { width: 6px; height: 6px; border-radius: 50%; background: #6e6e6e; display: block; }
.dock { margin-left: 623px; display: flex; align-items: center; gap: 38px; }
.app {
  width: 56px;
  height: 56px;
  border-radius: 20px;
  display: flex;
  align-items: center;
  justify-content: center;
}
.app-notes { background: linear-gradient(#e8402a, #d42323); }
.app-files { background: linear-gradient(#f9ab00, #f79500); }
.app-cal { background: linear-gradient(#0f8ea8, #0a7ea6); }
.cal-page {
  width: 36px;
  height: 38px;
  background: #f2f6f7;
  border-radius: 5px;
  color: #125f80;
  font-size: 24px;
  font-weight: 500;
  text-align: center;
  line-height: 40px;
}
.app-msg { background: #fff; box-shadow: inset 0 0 0 1px #f0f0f0; }
.app-net { background: linear-gradient(#6f80ee, #6a5fe6); }
.app-cam { background: #d9144f; }
.dock-sep { width: 2px; height: 36px; background: #bdbdbd; margin: 0 -10px; }
.app-wx { background: #07d068; }
.app-set { background: linear-gradient(#3d5a80, #2f4470); }
.sys-nav { margin-left: 272px; display: flex; align-items: center; }
.recent { display: flex; gap: 8px; }
.recent i { width: 3px; height: 27px; background: #616161; display: block; }
.home-sq {
  width: 27px;
  height: 27px;
  margin: 0 144px 0 139px;
  border: 2px solid #616161;
  border-radius: 8px;
  box-sizing: border-box;
}
</style>
